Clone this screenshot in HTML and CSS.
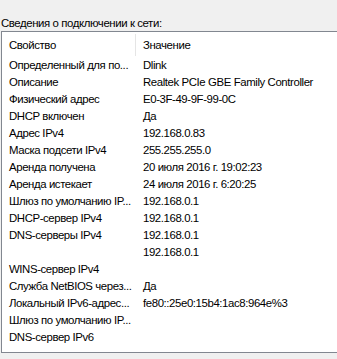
FILE: index.html
```html
<!DOCTYPE html>
<html lang="ru">
<head>
<meta charset="utf-8">
<title>Сведения о подключении к сети</title>
<link rel="stylesheet" href="styles.css">
</head>
<body>
<div class="dialog">
  <div class="caption">Сведения о подключении к сети:</div>
  <div class="listbox">
    <div class="header">
      <div class="hcell first">Свойство</div>
      <div class="hcell">Значение</div>
    </div>
    <div class="rows">
      <div class="c1">Определенный для по...</div><div class="c2">Dlink</div>
      <div class="c1">Описание</div><div class="c2">Realtek PCIe GBE Family Controller</div>
      <div class="c1">Физический адрес</div><div class="c2">E0-3F-49-9F-99-0C</div>
      <div class="c1">DHCP включен</div><div class="c2">Да</div>
      <div class="c1">Адрес IPv4</div><div class="c2">192.168.0.83</div>
      <div class="c1">Маска подсети IPv4</div><div class="c2">255.255.255.0</div>
      <div class="c1">Аренда получена</div><div class="c2">20 июля 2016 г. 19:02:23</div>
      <div class="c1">Аренда истекает</div><div class="c2">24 июля 2016 г. 6:20:25</div>
      <div class="c1">Шлюз по умолчанию IP...</div><div class="c2">192.168.0.1</div>
      <div class="c1">DHCP-сервер IPv4</div><div class="c2">192.168.0.1</div>
      <div class="c1">DNS-серверы IPv4</div><div class="c2">192.168.0.1</div>
      <div class="c1"></div><div class="c2">192.168.0.1</div>
      <div class="c1">WINS-сервер IPv4</div><div class="c2"></div>
      <div class="c1">Служба NetBIOS через...</div><div class="c2">Да</div>
      <div class="c1">Локальный IPv6-адрес...</div><div class="c2">fe80::25e0:15b4:1ac8:964e%3</div>
      <div class="c1">Шлюз по умолчанию IP...</div><div class="c2"></div>
      <div class="c1">DNS-сервер IPv6</div><div class="c2"></div>
    </div>
  </div>
</div>
</body>
</html>
```
FILE: styles.css
```css
html, body {
  margin: 0;
  padding: 0;
  background: #f0f0f0;
}
body {
  font-family: "Liberation Sans", Arial, sans-serif;
  font-size: 11.4px;
  letter-spacing: -0.4px;
  color: #000;
  width: 337px;
  height: 359px;
  overflow: hidden;
}
.dialog {
  display: flex;
  flex-direction: column;
  padding-top: 15px;
}
.caption {
  height: 16px;
  line-height: 16px;
  padding-left: 1px;
  white-space: nowrap;
}
.listbox {
  margin-left: 1px;
  background: #fff;
  border: 1px solid #828790;
  border-right: none;
  height: 320px;
  display: flex;
  flex-direction: column;
}
.header {
  display: grid;
  grid-template-columns: 134px 1fr;
  height: 25px;
  align-items: center;
}
.hcell {
  padding-left: 7px;
  height: 22px;
  line-height: 22px;
  white-space: nowrap;
}
.hcell.first {
  border-right: 1px solid #e5e5e5;
}
.rows {
  display: grid;
  grid-template-columns: 135px 1fr;
  grid-auto-rows: 17px;
}
.c1, .c2 {
  line-height: 17px;
  white-space: nowrap;
  overflow: hidden;
}
.c1 {
  padding-left: 7px;
}
.c2 {
  padding-left: 6px;
}
```
